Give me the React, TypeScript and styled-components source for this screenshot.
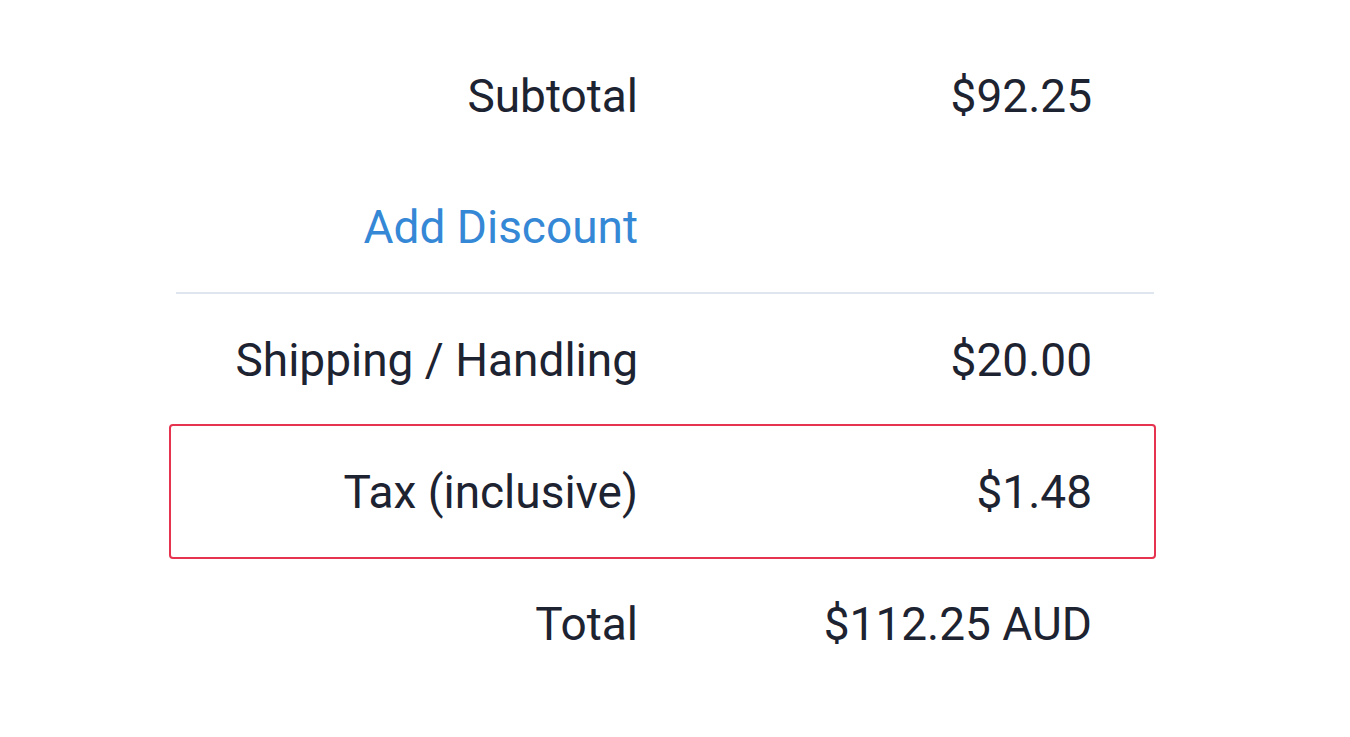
import React from "react";
import styled, { createGlobalStyle } from "styled-components";

const Global = createGlobalStyle`
  html, body { margin: 0; padding: 0; background: #ffffff; }
  body { font-family: Roboto, "Noto Sans", sans-serif; }
`;

const Page = styled.div`
  width: 1350px;
  height: 737px;
  padding: 29px 196px 0 176px;
  box-sizing: border-box;
  background: #ffffff;
`;

const Summary = styled.div`
  display: flex;
  flex-direction: column;
  width: 978px;
`;

const Row = styled.div<{ $boxed?: boolean; $h?: number }>`
  display: grid;
  grid-template-columns: 462px 1fr;
  align-items: center;
  height: ${(p) => (p.$boxed ? 135 : p.$h ?? 132)}px;
  box-sizing: border-box;
  padding-right: 62px;
  font-size: 46px;
  color: #1d2331;
  ${(p) =>
    p.$boxed &&
    `
    margin: -2px 0 0 -7px;
    width: 987px;
    padding-left: 5px;
    border: 2px solid #e6334f;
    border-radius: 4px;
  `}
`;

const Label = styled.span<{ $link?: boolean }>`
  text-align: right;
  color: ${(p) => (p.$link ? "#3588d6" : "inherit")};
`;

const Value = styled.span`
  text-align: right;
`;

const Divider = styled.div`
  height: 2px;
  background: #dfe6ef;
`;

export default function App() {
  return (
    <>
      <Global />
      <Page>
        <Summary>
          <Row $h={133}>
            <Label>Subtotal</Label>
            <Value>$92.25</Value>
          </Row>
          <Row $h={130}>
            <Label $link>Add Discount</Label>
            <Value />
          </Row>
          <Divider />
          <Row>
            <Label>Shipping / Handling</Label>
            <Value>$20.00</Value>
          </Row>
          <Row $boxed>
            <Label>Tax (inclusive)</Label>
            <Value>$1.48</Value>
          </Row>
          <Row $h={130}>
            <Label>Total</Label>
            <Value>$112.25 AUD</Value>
          </Row>
        </Summary>
      </Page>
    </>
  );
}
